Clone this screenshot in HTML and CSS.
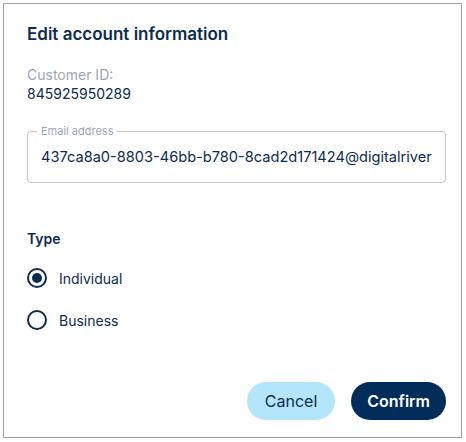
FILE: index.html
```html
<!DOCTYPE html>
<html lang="en">
<head>
<meta charset="utf-8">
<title>Edit account information</title>
<link rel="stylesheet" href="styles.css">
</head>
<body>
<div class="dialog">
  <h2 class="title">Edit account information</h2>
  <div class="customer">
    <div class="customer-label">Customer ID:</div>
    <div class="customer-value">845925950289</div>
  </div>
  <div class="field">
    <span class="legend">Email address</span>
    <input class="field-input" type="text" value="437ca8a0-8803-46bb-b780-8cad2d171424@digitalriver.com">
  </div>
  <div class="type-label">Type</div>
  <label class="radio-row"><input class="radio" type="radio" name="type" checked><span>Individual</span></label>
  <label class="radio-row"><input class="radio" type="radio" name="type"><span>Business</span></label>
  <div class="actions">
    <button class="btn btn-cancel">Cancel</button>
    <button class="btn btn-confirm">Confirm</button>
  </div>
</div>
</body>
</html>
```
FILE: styles.css
```css
html, body {
  margin: 0;
  padding: 0;
  background: #ffffff;
}
body {
  font-family: Inter, "Noto Sans", sans-serif;
  color: #0c2c4f;
}
.dialog {
  box-sizing: border-box;
  margin: 3px;
  width: 459px;
  height: 435px;
  border: 1px solid #9e9e9e;
  padding: 18px 15px 17px 23px;
  display: flex;
  flex-direction: column;
}
.title {
  margin: 0;
  font-size: 17px;
  line-height: 24px;
  font-weight: 600;
  color: #0c2c4f;
}
.customer {
  margin-top: 19px;
  font-size: 14px;
  line-height: 19px;
}
.customer-label {
  color: #9aa6b4;
}
.customer-value {
  color: #0c2c4f;
  font-size: 14px;
}
.field {
  position: relative;
  margin-top: 28px;
  height: 52px;
  box-sizing: border-box;
  border: 1px solid #c8c8c8;
  border-radius: 4px;
}
.legend {
  position: absolute;
  top: -8px;
  left: 9px;
  padding: 0 4px;
  background: #ffffff;
  font-size: 11px;
  line-height: 14px;
  color: #9aa6b4;
}
.field-input {
  box-sizing: border-box;
  width: 100%;
  height: 100%;
  border: none;
  outline: none;
  background: transparent;
  padding: 0 13px;
  font-family: inherit;
  font-size: 14.6px;
  color: #0c2c4f;
}
.type-label {
  margin-top: 46px;
  font-size: 14px;
  line-height: 20px;
  font-weight: 600;
}
.radio-row {
  display: flex;
  align-items: center;
  gap: 12px;
  height: 42px;
  font-size: 14px;
}
.type-label + .radio-row {
  margin-top: 8px;
}
.radio {
  appearance: none;
  -webkit-appearance: none;
  margin: 0;
  box-sizing: border-box;
  width: 20px;
  height: 20px;
  border: 2px solid #0c2c4f;
  border-radius: 50%;
  display: grid;
  place-items: center;
}
.radio:checked::after {
  content: "";
  width: 10px;
  height: 10px;
  border-radius: 50%;
  background: #0c2c4f;
}
.actions {
  margin-top: auto;
  display: flex;
  justify-content: flex-end;
  gap: 16px;
}
.btn {
  height: 38px;
  border: none;
  border-radius: 19px;
  font-family: inherit;
  font-size: 16px;
}
.btn-cancel {
  background: #b3e5fc;
  color: #0c2c4f;
  padding: 0 18px;
}
.btn-confirm {
  background: #002d59;
  color: #ffffff;
  font-weight: 600;
  padding: 0 16px;
}
```
